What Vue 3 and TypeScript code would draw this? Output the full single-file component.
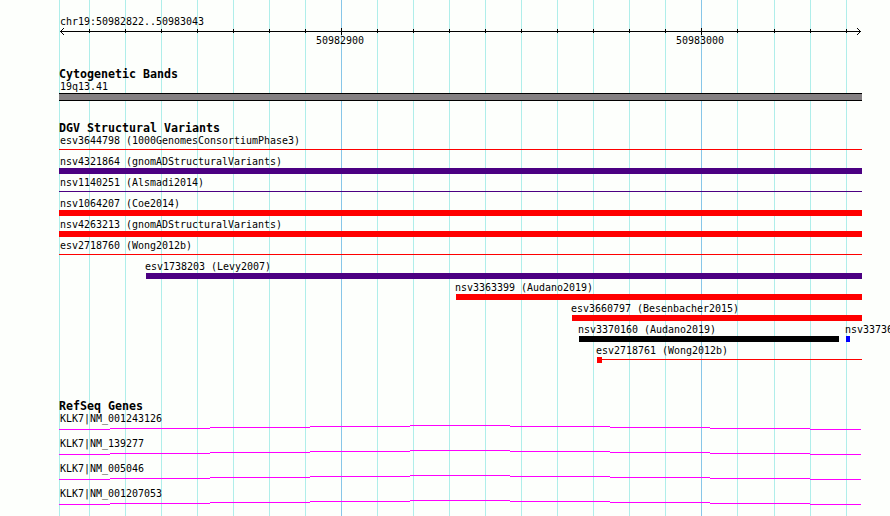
<script setup lang="ts">
interface Feature {
  name: string
  start: number
  end: number
  color: string
  shape: 'bar' | 'line' | 'anchored'
}

interface PlacedFeature extends Feature {
  gap: number
}

const LEFT = 59
const RIGHT = 862

const minorLines: number[] = [
  59, 89, 125, 161, 197, 233, 269, 305, 377, 413, 449, 485, 521, 557, 593, 629, 665, 737, 774, 810, 846,
]
const majorLines: number[] = [341, 701]
const minorTicks = minorLines.slice(1)

const RED = '#ff0000'
const INDIGO = '#4b0082'

const variants: Feature[][] = [
  [{ name: 'esv3644798 (1000GenomesConsortiumPhase3)', start: LEFT, end: RIGHT, color: RED, shape: 'line' }],
  [{ name: 'nsv4321864 (gnomADStructuralVariants)', start: LEFT, end: RIGHT, color: INDIGO, shape: 'bar' }],
  [{ name: 'nsv1140251 (Alsmadi2014)', start: LEFT, end: RIGHT, color: INDIGO, shape: 'line' }],
  [{ name: 'nsv1064207 (Coe2014)', start: LEFT, end: RIGHT, color: RED, shape: 'bar' }],
  [{ name: 'nsv4263213 (gnomADStructuralVariants)', start: LEFT, end: RIGHT, color: RED, shape: 'bar' }],
  [{ name: 'esv2718760 (Wong2012b)', start: LEFT, end: RIGHT, color: RED, shape: 'line' }],
  [{ name: 'esv1738203 (Levy2007)', start: 146, end: RIGHT, color: INDIGO, shape: 'bar' }],
  [{ name: 'nsv3363399 (Audano2019)', start: 456, end: RIGHT, color: RED, shape: 'bar' }],
  [{ name: 'esv3660797 (Besenbacher2015)', start: 572, end: RIGHT, color: RED, shape: 'bar' }],
  [
    { name: 'nsv3370160 (Audano2019)', start: 579, end: 839, color: '#000000', shape: 'bar' },
    { name: 'nsv33736', start: 846, end: 850, color: '#0000ff', shape: 'bar' },
  ],
  [{ name: 'esv2718761 (Wong2012b)', start: 597, end: RIGHT, color: RED, shape: 'anchored' }],
]

// Each feature is offset from the end of the one before it in the same row.
const rows: PlacedFeature[][] = variants.map((row) =>
  row.map((f, i) => ({ ...f, gap: f.start - (i === 0 ? LEFT : row[i - 1].end) })),
)

const genes: string[] = ['KLK7|NM_001243126', 'KLK7|NM_139277', 'KLK7|NM_005046', 'KLK7|NM_001207053']

// Shallow arch of an intron, as x offset, y and width of each step.
const intronSteps: [number, number, number][] = [
  [0, 4, 51],
  [51, 3, 100],
  [151, 2, 100],
  [251, 1, 100],
  [351, 0, 100],
  [451, 1, 100],
  [551, 2, 100],
  [651, 3, 100],
  [751, 4, 51],
]
</script>

<template>
  <main class="browser">
    <svg class="gridlines" width="890" height="516" shape-rendering="crispEdges" aria-hidden="true">
      <rect v-for="x in minorLines" :key="x" class="minor" :x="x" y="0" width="1" height="516" />
      <rect v-for="x in majorLines" :key="x" class="major" :x="x" y="0" width="1" height="516" />
    </svg>

    <section class="ruler">
      <div class="label inset">chr19:50982822..50983043</div>
      <svg class="axis" width="803" height="6" viewBox="59 28 803 6" shape-rendering="crispEdges">
        <rect x="60" y="31" width="801" height="1" />
        <rect v-for="x in minorTicks" :key="x" :x="x" y="29" width="1" height="4" />
        <rect v-for="x in majorLines" :key="x" :x="x" y="28" width="1" height="7" />
        <path d="M63 28h1v1h-1zM62 29h1v1h-1zM61 30h1v1h-1zM61 32h1v1h-1zM62 33h1v1h-1zM63 34h1v1h-1z" />
        <path d="M857 28h1v1h-1zM858 29h1v1h-1zM859 30h1v1h-1zM859 32h1v1h-1zM858 33h1v1h-1zM857 34h1v1h-1z" />
      </svg>
      <div class="numbers">
        <span class="label">50982900</span>
        <span class="label">50983000</span>
      </div>
    </section>

    <section class="bands">
      <h2>Cytogenetic Bands</h2>
      <div class="label inset">19q13.41</div>
      <div class="band"></div>
    </section>

    <section class="variants">
      <h2>DGV Structural Variants</h2>
      <div v-for="(row, i) in rows" :key="i" class="row">
        <div
          v-for="f in row"
          :key="f.name"
          class="feature"
          :style="{ marginLeft: f.gap + 'px', width: f.end - f.start + 'px', color: f.color }"
        >
          <div class="label" :class="f.start === LEFT ? 'inset' : 'outset'">{{ f.name }}</div>
          <div class="glyph" :class="f.shape"></div>
        </div>
      </div>
    </section>

    <section class="genes">
      <h2>RefSeq Genes</h2>
      <div v-for="g in genes" :key="g" class="gene">
        <div class="label inset">{{ g }}</div>
        <svg class="intron" width="802" height="5" shape-rendering="crispEdges">
          <rect v-for="s in intronSteps" :key="s[0]" :x="s[0]" :y="s[1]" :width="s[2]" height="1" />
        </svg>
      </div>
    </section>
  </main>
</template>

<style>
body {
  margin: 0;
  overflow: hidden;
  background: #fdfffc;
}
</style>

<style scoped>
.browser {
  position: relative;
  box-sizing: border-box;
  width: 890px;
  height: 516px;
  padding: 15px 28px 0 59px;
  overflow: hidden;
  background: #fdfffc;
  color: #000;
  font-family: 'DejaVu Sans Mono', 'Liberation Mono', monospace;
}

.gridlines {
  position: absolute;
  top: 0;
  left: 0;
}

.minor {
  fill: #afeeea;
}

.major {
  fill: #87c6e8;
}

section {
  position: relative;
}

h2 {
  width: max-content;
  height: 13px;
  margin: 0;
  font-size: 12px;
  line-height: 14px;
  font-weight: 700;
  white-space: pre;
  transform: scaleX(0.969);
  transform-origin: left;
}

.label {
  width: max-content;
  height: 13px;
  color: #000;
  font-size: 11px;
  line-height: 13px;
  white-space: pre;
  transform: scaleX(0.906);
  transform-origin: left;
}

.inset {
  margin-left: 1px;
}

.outset {
  margin-left: -1px;
}

.axis {
  display: block;
  overflow: visible;
}

.numbers {
  display: grid;
  grid-template-columns: 360px 360px;
  padding-left: 257px;
  width: 546px;
}

.bands {
  margin-top: 20px;
}

.band {
  box-sizing: border-box;
  height: 8px;
  border: solid #000;
  border-width: 1px 0;
  background: #848082;
}

.variants {
  margin-top: 20px;
}

.row {
  display: flex;
  height: 21px;
}

.feature {
  flex: none;
}

.glyph {
  height: 6px;
}

.glyph.bar {
  background: currentColor;
}

.glyph.line {
  height: 1px;
  margin-top: 2px;
  background: currentColor;
}

.glyph.anchored {
  background:
    linear-gradient(currentColor, currentColor) 0 0 / 5px 6px no-repeat,
    linear-gradient(currentColor, currentColor) 0 2px / 100% 1px no-repeat;
}

.genes {
  margin-top: 34px;
}

.gene {
  height: 25px;
}

.intron {
  display: block;
  fill: #ff00ff;
}
</style>
